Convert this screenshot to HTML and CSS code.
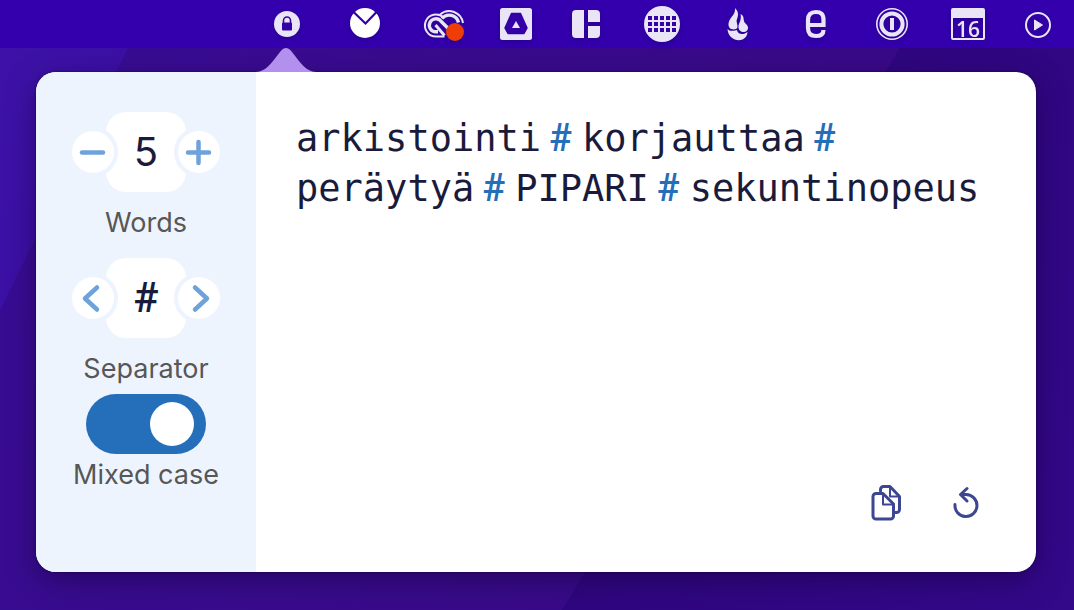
FILE: index.html
```
<!DOCTYPE html>
<html lang="en">
<head>
<meta charset="utf-8">
<title>Passphrase generator</title>
<link rel="stylesheet" href="styles.css">
</head>
<body>
<nav class="menubar" aria-label="Menu bar">
  <button class="menu-icon" aria-label="Passphrases"><svg viewBox="5 0 40 40"><circle cx="20" cy="20" r="13" fill="currentColor"/><path d="M16.500 19v-2.500a3.500 3.500 0 0 1 7 0V19" fill="none" stroke="#3400a8" stroke-width="1.600"/><rect x="15" y="18.500" width="10" height="8" rx="1" fill="#3400a8"/></svg></button>
  <button class="menu-icon" aria-label="Mail"><svg viewBox="3 0 40 40"><circle cx="20" cy="19" r="15" fill="#fff"/><path d="M8 7.500 20.500 19.500 32 7.500" fill="none" stroke="#3400a8" stroke-width="2.200"/></svg></button>
  <button class="menu-icon" aria-label="Creative Cloud"><svg viewBox="2 0 40 40"><g fill="none" stroke="currentColor"><path d="M18 10.500A14 14 0 0 1 41 19" stroke-width="2"/><path d="M20 14.500a9.500 9.500 0 0 1 16.500 4" stroke-width="3.400"/><path d="M22.500 32.500H14a11 11 0 1 1 7.500-19" stroke-width="2"/><path d="M16 27.800h-2a6.500 6.500 0 1 1 5-10.500l8 8" stroke-width="3.400"/><path d="m13.500 21 9 10.500" stroke-width="3"/></g><circle cx="33" cy="28" r="9" fill="#ee3d06"/></svg></button>
  <button class="menu-icon" aria-label="Drive"><svg viewBox="4 0 40 40"><rect x="4" y="4" width="32" height="32" rx="2.500" fill="currentColor"/><path d="M15.500 9.500h9L31 24l-3 5.500H12L9 24z" fill="#3400a8" stroke="#3400a8" stroke-width="1.500" stroke-linejoin="round"/><path d="m20 17 4 7h-8z" fill="currentColor"/></svg></button>
  <button class="menu-icon narrow" aria-label="Window layout"><svg viewBox="6 0 40 40"><path d="M10 6h8v28h-8a4 4 0 0 1-4-4V10a4 4 0 0 1 4-4zM22 6h8a4 4 0 0 1 4 4v8H22zM22 22h12v8a4 4 0 0 1-4 4h-8z" fill="currentColor"/></svg></button>
  <button class="menu-icon" aria-label="Keyboard"><svg viewBox="2 0 40 40"><circle cx="20" cy="20" r="18" fill="currentColor"/><path d="M6 14h28M6 20h28M6 26h28" stroke="#3400a8" stroke-width="4" stroke-dasharray="4 2"/></svg></button>
  <button class="menu-icon" aria-label="Backup"><svg viewBox="2 0 40 40"><path d="M17 4c5 5 2.500 9 1.500 13 .8 4 2 7-.5 8-3 1-7 .5-7.500-4C10 14 18 11.500 17 4zM22.500 10c5 2 1.500 7 5.500 10 4 3.500 1.500 8-2 8-5 0-6.500-4.500-5-8 1-2.500 2.500-5.500 1.500-10zM9.500 25c2 3 8 1.500 9.500 1 .5 5 7 5 10.500 2-.5 12-19.500 10.500-20-3z" fill="currentColor"/></svg></button>
  <button class="menu-icon" aria-label="Editor"><svg viewBox="1 0 40 40"><path d="M13 21h15.500v-5c0-6-2.500-8-7.500-8s-8 2-8 8v8c0 6 3 8 8 8s7.500-2 7.500-6" fill="none" stroke="currentColor" stroke-width="4.200"/></svg></button>
  <button class="menu-icon" aria-label="Password manager"><svg viewBox="0 0 40 40"><circle cx="20" cy="20" r="15.200" fill="none" stroke="currentColor" stroke-width="1.600"/><circle cx="20" cy="20" r="10.600" fill="none" stroke="currentColor" stroke-width="4"/><path d="M20 14v12" stroke="currentColor" stroke-width="4"/></svg></button>
  <button class="menu-icon" aria-label="Calendar, day 16"><span class="calendar-day">16</span></button>
  <button class="menu-icon narrow" aria-label="Now playing"><svg viewBox="2 0 40 40"><circle cx="20" cy="21" r="12" fill="none" stroke="currentColor" stroke-width="2"/><path d="M16.500 16v10l8-5z" fill="currentColor" stroke="currentColor" stroke-linejoin="round"/></svg></button>
</nav>

<main class="popover">
  <svg class="popover-arrow" viewBox="0 0 60 24" aria-hidden="true"><path d="M0 24c10-1 14-7 24-20q6-8 12 0c10 13 14 19 24 20z"/></svg>
  <form class="settings">
    <div class="setting">
      <div class="stepper">
        <button type="button" class="step" aria-label="Fewer words"><svg viewBox="0 0 42 42"><path d="M10 21.500h21"/></svg></button>
        <output class="value" aria-labelledby="words-label">5</output>
        <button type="button" class="step step-next" aria-label="More words"><svg viewBox="0 0 42 42"><path d="M10 21.500h21M20.500 11v21"/></svg></button>
      </div>
      <span class="label" id="words-label">Words</span>
    </div>
    <div class="setting">
      <div class="stepper">
        <button type="button" class="step" aria-label="Previous separator"><svg viewBox="0 0 42 42"><path d="M25 10.500 13 21.500 25 32.500"/></svg></button>
        <output class="value value-symbol" aria-labelledby="separator-label">#</output>
        <button type="button" class="step step-next" aria-label="Next separator"><svg viewBox="0 0 42 42"><path d="m17 10.500 12 11L17 32.500"/></svg></button>
      </div>
      <span class="label" id="separator-label">Separator</span>
    </div>
    <div class="toggle">
      <input type="checkbox" class="switch" id="mixed" role="switch" checked>
      <label class="label" for="mixed">Mixed case</label>
    </div>
  </form>
  <section class="result">
    <p class="phrase" lang="fi">arkistointi<span class="separator">#</span><wbr>korjauttaa<span class="separator">#</span><wbr>peräytyä<span class="separator">#</span><wbr>PIPARI<span class="separator">#</span><wbr>sekuntinopeus</p>
    <div class="actions">
      <button type="button" class="action" aria-label="Copy"><svg viewBox="-1 0 40 40"><path d="M13.500 9V7.500a3 3 0 0 1 3-3H23l9.500 10v13a3 3 0 0 1-3 3h-3"/><path d="M9 11.500h7L26.500 22v12a3 3 0 0 1-3 3H9a3 3 0 0 1-3-3V14.500a3 3 0 0 1 3-3z"/><path d="M16 12v10.500h10M23 5v9.500h9" class="thin"/></svg></button>
      <button type="button" class="action" aria-label="Generate again"><svg viewBox="0 0 40 40"><path d="M9 22.500A11 11 0 1 0 20 12.500h-5M21 6.500l-6.500 6L21 19"/></svg></button>
    </div>
  </section>
</main>
</body>
</html>
```

FILE: styles.css
```
* { box-sizing: border-box; }

body {
  margin: 0;
  min-height: 100vh;
  display: flex;
  flex-direction: column;
  font-family: Inter, "Liberation Sans", sans-serif;
  background:
    linear-gradient(121deg, transparent 796px, #2f067f 796px, #330889 100%),
    linear-gradient(116deg, #3e12a8 0, #3b10a4 136px, #380c92 136px, #390a88 780px);
}

button {
  border: 0;
  padding: 0;
  background: none;
  color: inherit;
  font: inherit;
  cursor: pointer;
}

svg { display: block; width: 100%; height: 100%; }

.menubar {
  display: flex;
  justify-content: flex-end;
  align-items: center;
  height: 48px;
  background: #3400ae;
  color: #e9e4f6;
}

.menu-icon {
  display: flex;
  justify-content: center;
  align-items: center;
  width: 76px;
  height: 40px;
  filter: drop-shadow(0 2px 3px rgb(20 0 80 / 35%));
}

.menu-icon.narrow { width: 68px; }

.calendar-day {
  width: 34px;
  height: 32px;
  border: 2px solid;
  border-top-width: 10px;
  border-radius: 2px;
  font: 600 21px/22px "Open Sans", sans-serif;
  text-align: center;
}

.popover {
  position: relative;
  flex: 1;
  display: flex;
  margin: 24px 38px 38px 36px;
  border-radius: 20px;
  background: #fff;
  box-shadow: 0 0 2px rgb(0 0 0 / 60%), 0 8px 28px rgb(20 0 60 / 50%);
}

.popover-arrow {
  position: absolute;
  left: 220px;
  bottom: 100%;
  width: 60px;
  height: 24px;
  fill: #b38fee;
}

.settings {
  display: flex;
  flex-direction: column;
  align-items: center;
  width: 220px;
  padding-top: 40px;
  border-radius: 20px 0 0 20px;
  background: #edf4fd;
}

.setting {
  display: flex;
  flex-direction: column;
  align-items: center;
  gap: 11px;
  padding-bottom: 15px;
}

.stepper {
  display: flex;
  align-items: center;
}

.value {
  width: 80px;
  height: 80px;
  border-radius: 20px;
  background: #fff;
  color: #1a1b3c;
  font-size: 40px;
  line-height: 80px;
  text-align: center;
}

.value-symbol {
  font-family: Roboto, sans-serif;
  font-size: 42px;
  font-weight: 500;
}

.step {
  box-sizing: content-box;
  z-index: 1;
  width: 42px;
  height: 42px;
  margin: 0 -12px 0 -4px;
  border: 4px solid #edf4fd;
  border-radius: 50%;
  background: #fff;
}

.step-next { margin: 0 -4px 0 -12px; }

.step path {
  fill: none;
  stroke: #6ea2db;
  stroke-width: 4.500;
  stroke-linecap: round;
  stroke-linejoin: round;
}

.label {
  color: #575757;
  font-size: 27px;
  line-height: 40px;
}

.toggle {
  display: flex;
  flex-direction: column;
  align-items: center;
  gap: 1px;
  margin-top: -10px;
}

.switch {
  appearance: none;
  width: 120px;
  height: 60px;
  margin: 0;
  padding: 8px 12px;
  border-radius: 30px;
  background: #9aa8b8;
  cursor: pointer;
}

.switch::before {
  content: "";
  display: block;
  width: 44px;
  height: 44px;
  border-radius: 50%;
  background: #fff;
}

.switch:checked { background: #246eba; }
.switch:checked::before { margin-left: auto; }

.result {
  flex: 1;
  display: flex;
  flex-direction: column;
  justify-content: space-between;
  padding: 42px 40px 40px;
}

.phrase {
  margin: 0;
  color: #1a1b3c;
  font: 37px/50px "DejaVu Sans Mono", monospace;
}

.separator {
  margin: 0 10px 0 8px;
  color: #246eba;
  font-family: Roboto, sans-serif;
  font-size: 38px;
  font-weight: 500;
  line-height: 1;
}

.actions {
  display: flex;
  justify-content: flex-end;
  gap: 40px;
  padding: 0 10px 10px 0;
}

.action {
  width: 40px;
  height: 40px;
}

.action path {
  fill: none;
  stroke: #3d4791;
  stroke-width: 3;
  stroke-linecap: round;
  stroke-linejoin: round;
}

.action .thin { stroke-width: 2; }
```
